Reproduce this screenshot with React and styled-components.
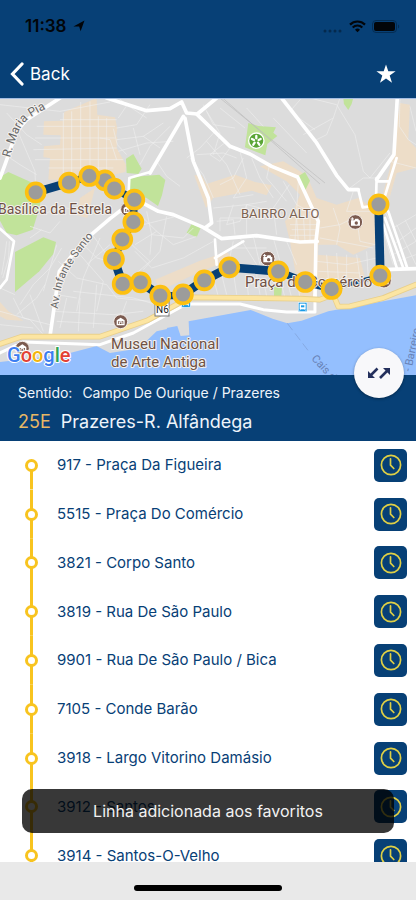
import React from "react";
import styled, { createGlobalStyle } from "styled-components";

const navy = "#074076";
const amber = "#f8c41f";

const GlobalStyle = createGlobalStyle`
  *, *::before, *::after { box-sizing: border-box; }
  body { margin: 0; background: #fff; font-family: Inter, "Liberation Sans", sans-serif; }
  button { font: inherit; border: 0; padding: 0; cursor: pointer; }
  svg { display: block; }
`;

const Screen = styled.div`
  display: flex;
  flex-direction: column;
  height: 100vh;
  min-height: 600px;
  overflow: hidden;
  background: #fff;
`;

const Header = styled.header`
  flex: none;
  background: ${navy};
`;

const StatusBar = styled.div`
  display: flex;
  align-items: center;
  justify-content: space-between;
  height: 52px;
  padding: 0 16px 0 25px;
  color: #020509;
`;

const StatusGroup = styled.div`
  display: flex;
  align-items: center;
  gap: 6px;
`;

const Clock = styled.time`
  font-size: 17px;
  line-height: 20px;
  font-weight: 600;
`;

const NavBar = styled.nav`
  display: flex;
  align-items: center;
  justify-content: space-between;
  height: 46px;
  padding: 0 20px 2px 10px;
`;

const NavButton = styled.button`
  display: flex;
  align-items: center;
  gap: 6px;
  background: none;
  color: #fff;
  font-size: 17px;
  line-height: 24px;
`;

const MapArea = styled.section`
  flex: none;
  height: 277px;
  background: #dcdcdc;
`;

const MapSvg = styled.svg`
  width: 100%;
  height: 100%;
  font-family: Roboto, "Liberation Sans", sans-serif;
`;

const Place = styled.text`
  fill: ${(p) => p.$fill || "#6f5145"};
  font-size: ${(p) => p.$size}px;
  font-weight: ${(p) => p.$weight || 400};
  stroke: ${(p) => p.$halo || "#f4f1ee"};
  stroke-width: 2px;
  stroke-linejoin: round;
  paint-order: stroke;
`;

const LineInfo = styled.section`
  position: relative;
  flex: none;
  display: flex;
  flex-direction: column;
  gap: 6px;
  padding: 8px 18px 6px;
  background: ${navy};
  color: #eef4fb;
`;

const Direction = styled.p`
  display: flex;
  gap: 10px;
  margin: 0;
  font-size: 14px;
  line-height: 20px;
`;

const LineName = styled.h1`
  display: flex;
  gap: 10px;
  margin: 0;
  font-size: 18px;
  line-height: 26px;
  font-weight: 400;
`;

const LineCode = styled.span`
  color: #e6b765;
`;

const SwapButton = styled.button`
  position: absolute;
  top: -27px;
  right: 12px;
  display: grid;
  place-items: center;
  width: 50px;
  height: 50px;
  border-radius: 50%;
  background: #f8f8fa;
  box-shadow: 0 1px 3px rgba(0, 0, 0, 0.35);
`;

const StopsArea = styled.main`
  position: relative;
  flex: 1;
  min-height: 0;
  overflow: hidden;
`;

const StopList = styled.ol`
  display: grid;
  grid-auto-rows: minmax(48px, 1fr);
  height: calc(100% + 18px);
  margin: 0;
  padding: 0;
  list-style: none;
`;

const StopRow = styled.li`
  display: grid;
  grid-template-columns: 13px 1fr 33px;
  column-gap: 19px;
  align-items: center;
  padding: 0 9px 0 25px;
  color: ${navy};
  font-size: 15px;
  line-height: 20px;
`;

const Rail = styled.span`
  display: grid;
  align-self: stretch;
  place-items: center;
  background: linear-gradient(${amber}, ${amber}) center bottom / 3px
    ${(p) => (p.$first ? "50%" : "100%")} no-repeat;
`;

const RailDot = styled.span`
  width: 13px;
  height: 13px;
  border: 3px solid ${amber};
  border-radius: 50%;
  background: #fff;
`;

const TimesButton = styled.button`
  display: grid;
  place-items: center;
  height: 33px;
  border-radius: 5px;
  background: ${navy};
`;

const Toast = styled.div`
  position: absolute;
  right: 22px;
  bottom: 29px;
  left: 22px;
  padding: 12px;
  border-radius: 10px;
  background: rgba(0, 0, 0, 0.78);
  color: #f2f2f2;
  font-size: 16px;
  line-height: 20px;
  text-align: center;
`;

const HomeArea = styled.footer`
  flex: none;
  display: flex;
  justify-content: center;
  padding: 23px 0 9px;
  background: #e9e9e9;
`;

const HomeIndicator = styled.span`
  width: 148px;
  height: 6px;
  border-radius: 3px;
  background: #000;
`;

const stops = [
  "917 - Praça Da Figueira",
  "5515 - Praça Do Comércio",
  "3821 - Corpo Santo",
  "3819 - Rua De São Paulo",
  "9901 - Rua De São Paulo / Bica",
  "7105 - Conde Barão",
  "3918 - Largo Vitorino Damásio",
  "3912 - Santos",
  "3914 - Santos-O-Velho",
];

const markers = [
  [107, 283], [207, 254], [315, 247], [268, 234], [343, 272], [403, 305],
  [400, 372], [367, 424], [342, 483], [368, 558], [422, 553], [481, 593],
  [549, 589], [613, 547], [688, 508], [835, 520], [916, 552], [995, 573],
  [1141, 533], [1136, 319],
];

const water = [
  "M0 834V792L190 770L290 744L330 765L410 752L425 790L330 834Z",
  "M330 834L470 700L505 692L512 712L500 690L532 684L542 714L568 712L566 670L752 636L818 662L862 676L905 668L985 640L1248 592V834Z",
];

const urban = [
  "M193 42L290 0L292 50L345 58L352 92L335 215L262 222L240 245L145 245L150 180L130 178L132 145L180 140L182 112L130 110L132 70L190 68Z",
  "M335 92L352 120L350 150L378 200L376 222L335 232L320 120Z",
  "M240 300L285 270L262 360L232 352Z",
  "M583 232L605 232L620 258L675 240L705 230L765 252L815 262L800 292L755 278L705 288L640 300L618 330L600 280Z",
  "M780 205L850 190L920 232L950 300L1010 320L1075 300L1130 340L1125 440L1060 470L1010 440L955 440L950 600L900 600L870 430L855 370L880 340L900 290L860 250Z",
  "M1200 15L1230 20L1225 125L1248 150V210L1190 225L1160 330L1140 320L1170 210Z",
  "M465 545L600 488L680 462L700 480L560 540L480 580Z",
  "M0 612L25 640L70 668L20 665L0 655Z",
  "M950 470L1080 480L1100 560L990 570L950 560Z",
];

const parks = [
  "M0 238L25 222L100 256L125 300L112 350L98 395L50 412L20 405L0 368Z",
  "M45 462L130 418L168 432L160 468L118 520L45 582Z",
  "M378 182L400 168L425 212L415 228L380 225Z",
  "M388 238L478 230L496 246L486 292L474 324L440 300L400 290L385 270Z",
  "M745 75L775 84L828 88L820 104L832 114L802 138L796 172L735 148Z",
  "M895 235L915 222L930 248L915 278Z",
  "M1030 0H1060L1055 18L1045 36L1032 18Z",
  "M575 378L602 390L590 418L560 404Z",
  "M822 560L846 565L844 598L822 596Z",
];

const lanes = [
  "M0 20L180 40L330 12M20 45L80 110L125 140M45 80L105 220L108 300M0 160L60 200L110 230",
  "M190 45V230M215 40V240M242 12V245M270 10V240M295 55V225M320 60V218M110 85H345M105 120H345M100 155L350 150M105 185H370M145 210H340M180 65H350",
  "M355 60L382 20L355 0M350 90L410 80L450 20M350 125L430 115L490 75M355 160L440 135L520 130M380 20L440 60M430 115L480 150M400 90L420 170M340 92L352 140L380 170M300 120L330 125L350 185",
  "M470 190L500 235L540 265M510 85L450 145L420 200M425 355L470 400L520 440L590 415M430 380L530 355M440 340L455 410L450 470M470 400L405 440M405 460L455 510L550 480L640 430M455 410L550 420L580 390M500 355L480 460L430 515M390 435L450 490L405 530",
  "M570 180L610 230L640 300M620 130L680 200L720 290M650 95L600 150L560 180M590 170L670 165L710 180M620 40L660 105L640 170M680 130L630 170L660 190L690 150M730 180L700 240L660 260M720 160L740 240L700 300L760 290M755 180L780 240L820 300M700 320L680 380L720 370L740 320L800 310M640 330L740 320L780 330M650 370L700 365L705 410M740 320V410M660 400V360H740M810 195L800 240L860 310",
  "M660 30L735 90M610 20L640 80L705 90M740 30L790 85M820 60L920 165M905 0L870 40L945 95M930 0L1010 20M910 110L1000 60L1020 0M940 130L980 110L1000 60M1010 20L1065 110L1090 220L1110 240M1170 165L1110 240M1130 240L1090 240L1050 270M1170 190L1248 210M1200 0L1198 85L1225 125L1248 140M1230 25L1248 100",
  "M868 260L820 330L830 410M850 250L890 320L945 350M895 250L885 430M870 380H950M875 395H950M870 412H950M890 360L895 430M910 350L915 430M930 345V430M960 390L1020 380L1060 360M1000 330L1020 390L1010 440M1060 280L1040 340L1110 340M1070 360L1080 430L1125 440M960 420L1120 450",
  "M700 430L685 500M720 420L770 500M760 415L780 500M820 420L840 490M860 430L890 500M700 450H800M770 530L780 590M790 540L800 595M700 520L710 590M740 535L745 592M665 530L680 590M640 540L655 595M845 560L855 600M860 540L875 600M890 540L900 600M950 490L1040 500L1130 480M955 520L1080 525M980 470L985 540M1010 465L1015 545M1040 470V550M1070 470L1080 540M1100 460L1105 540",
  "M1180 440L1248 390M1180 470L1248 430M1190 490L1248 470M1150 330L1180 390L1248 350M1190 380L1248 500M1215 365L1248 430M1150 400L1180 500",
  "M120 350L190 330L260 335M175 490L230 540L320 560L350 600L450 610M200 520L170 590L230 600M250 440L290 480L330 490M240 470L310 550L290 640M270 400L320 470M260 500L330 440M300 420L250 540L230 640M220 580L400 600L470 620M160 640L340 650L430 640M170 670L350 680M200 600L180 690M240 600L235 700M290 560L280 690M380 610L365 650M50 650L110 600L135 560M40 600L70 660L150 680M90 590L130 700M0 640L90 665L130 710M0 680L100 690M0 570L45 590",
  "M90 385L150 405L180 370M125 395L90 420M170 440L130 580M185 450L150 510L100 560L60 620M20 430L15 470L5 530M28 430L26 480L8 540",
];

const minorRoads = [
  "M305 230L390 312M385 305L388 240L450 222M730 430L645 480M645 425L650 500M1130 240L1128 310M1135 250L1165 250M1190 180L1150 310M1155 360L1210 510M1165 340L1222 510M1150 380L1192 515M1075 275L1088 328L1110 325M0 392L42 430L20 545L0 570",
];

const roads = [
  "M180 0L80 65L50 100L15 200L0 240",
  "M320 0L440 38L510 32L545 12L560 45L592 48L650 0",
  "M550 55L450 225",
  "M555 60L580 190L625 300L635 375L615 390",
  "M592 50L690 145L750 168L815 205L893 237L955 370L948 430L945 600",
  "M845 0L950 135L1010 232L1045 275L1075 275",
  "M1192 0L1182 170L1130 245",
  "M400 300L475 340L520 350L610 388L665 422L770 413L900 432L952 430",
  "M395 312L330 362L250 430L178 520L150 715",
  "M1150 515L1248 512",
];

const mainRoad =
  "M0 738L65 716L300 716L440 668L570 598L900 602L960 605L1000 590L1015 626L1050 625L1150 600L1248 560";

function LocationIcon() {
  return (
    <svg width="12" height="12" viewBox="0 0 12 12" aria-hidden="true">
      <path d="M11.5.5L7.6 11.2 6.2 6.4H.4z" fill="currentColor" />
    </svg>
  );
}

function SignalIcon() {
  return (
    <svg width="20" height="13" viewBox="0 0 20 13" aria-hidden="true" fill="#04294d">
      <circle cx="2" cy="11" r="1.5" />
      <circle cx="7" cy="11" r="1.5" />
      <circle cx="12" cy="11" r="1.5" />
      <circle cx="17" cy="11" r="1.5" />
    </svg>
  );
}

function WifiIcon() {
  return (
    <svg width="17" height="13" viewBox="0 0 17 13" aria-hidden="true" fill="none" stroke="currentColor">
      <path d="M1 4.6a10.6 10.6 0 0 1 15 0" strokeWidth="2.2" />
      <path d="M3.7 7.5a6.8 6.8 0 0 1 9.6 0" strokeWidth="2.1" />
      <path d="M8.5 12.3L6 9.8a3.5 3.5 0 0 1 5 0z" fill="currentColor" stroke="none" />
    </svg>
  );
}

function BatteryIcon() {
  return (
    <svg width="28" height="13" viewBox="0 0 28 13" aria-hidden="true">
      <rect x="0.5" y="0.5" width="24" height="12" rx="3.5" fill="none" stroke="#042c52" />
      <rect x="2" y="2" width="21" height="9" rx="2" fill="currentColor" />
      <path d="M26 4.5c1.6.5 1.6 3.5 0 4z" fill="#042c52" />
    </svg>
  );
}

function ChevronIcon() {
  return (
    <svg width="14" height="24" viewBox="0 0 14 24" aria-hidden="true">
      <path d="M12 2L2.5 12 12 22" fill="none" stroke="#fff" strokeWidth="3.2" strokeLinecap="round" />
    </svg>
  );
}

function StarIcon() {
  return (
    <svg width="20" height="20" viewBox="0 0 20 20" aria-hidden="true">
      <path d="M10 .4l2.300 6.900h7.300l-5.900 4.300 2.300 7.200L10 14.400l-6 4.400 2.300-7.200L.4 7.300h7.300z" fill="#fff" />
    </svg>
  );
}

function SwapIcon() {
  return (
    <svg width="24" height="12" viewBox="0 0 24 12" aria-hidden="true" fill="#24305c">
      <path d="M1 4V11H8zM16 1H23V8z" />
      <path d="M10.500 1.500L4 8M13 11L20 4" stroke="#24305c" strokeWidth="2.600" />
    </svg>
  );
}

function TimesIcon() {
  return (
    <svg width="22" height="22" viewBox="0 0 22 22" aria-hidden="true" fill="none" stroke="#dfcf45" strokeWidth="1.7">
      <circle cx="11" cy="11" r="9.6" />
      <path d="M10.5 4.8v6.4l3.3 3.3" strokeLinecap="round" strokeLinejoin="round" />
    </svg>
  );
}

function CameraPin({ x, y }) {
  return (
    <g transform={`translate(${x} ${y})`}>
      <circle r="22" fill="#7b5b50" stroke="#f5efeb" strokeWidth="3" />
      <path d="M-13-5h10l3-5h9l2 5h3V11h-27z" fill="#fff" />
      <circle cx="3" cy="3" r="5" fill="#7b5b50" />
      <path d="M-9-14v10M-14-9h10" stroke="#fff" strokeWidth="3" />
    </g>
  );
}

function MuseumPin({ x, y }) {
  return (
    <g transform={`translate(${x} ${y})`}>
      <circle r="21" fill="#7b5b50" stroke="#f5efeb" strokeWidth="3" />
      <path d="M-12-4L0-12 12-4V11h-24zM-8-1V7H8V-1z" fill="#fff" fillRule="evenodd" />
      <path d="M-4 7V1h8v6" fill="none" stroke="#fff" strokeWidth="3" />
    </g>
  );
}

function StationPin({ x, y }) {
  return (
    <g transform={`translate(${x} ${y})`}>
      <rect x="-13" y="-14" width="26" height="28" fill="#1a9be6" stroke="#e7f4fc" strokeWidth="2" />
      <path d="M-8-9H8V6H-8zM-6 6l-3 5M6 6l3 5" fill="#fff" stroke="#fff" strokeWidth="2" />
      <path d="M-5-5H5V1H-5z" fill="#1a9be6" />
    </g>
  );
}

function RouteMap() {
  return (
    <MapSvg viewBox="0 0 416 277" preserveAspectRatio="xMidYMid slice" role="img" aria-label="Mapa do percurso da linha 25E">
      <defs>
        <path id="street-pia" d="M10 60Q17 33 24 25Q30 18 50 9" />
        <path id="street-santo" d="M58 211Q60 187 68 173Q76 158 98 133" />
      </defs>
      <g transform="scale(0.3333)">
        <rect width="1248" height="834" fill="#dcdcdc" />
        {urban.map((d) => <path key={d} d={d} fill="#edddc8" />)}
        {parks.map((d) => <path key={d} d={d} fill="#c1e39a" />)}
        {water.map((d) => <path key={d} d={d} fill="#94bffe" />)}
        <g fill="none" stroke="#efefef" strokeOpacity="0.8" strokeWidth="2.2" strokeLinejoin="round">
          {lanes.map((d) => <path key={d} d={d} />)}
        </g>
        <path d="M660 0L975 255M668 0L960 258" fill="none" stroke="#bdbdbd" strokeWidth="2" />
        <path d="M862 676L930 765" fill="none" stroke="#7f9fd4" strokeWidth="2" strokeDasharray="26 12" />
        <g fill="none" stroke="#fff" strokeLinejoin="round" strokeLinecap="round">
          {minorRoads.map((d) => <path key={d} d={d} strokeWidth="8" />)}
          {roads.map((d) => <path key={d} d={d} strokeWidth="11" />)}
          <path d="M0 765L70 732L300 740L400 705L560 618L720 618L790 635L860 642L945 642V590" strokeWidth="9" />
          <path d={mainRoad} stroke="#e8cf8b" strokeWidth="17" />
          <path d={mainRoad} stroke="#fce5a2" strokeWidth="12" />
        </g>
        <circle cx="769" cy="128" r="23" fill="#5aa636" stroke="#fff" strokeWidth="4" />
        <g stroke="#fff" strokeWidth="7" strokeLinecap="round">
          <path d="M769 121V114M776 126L782 123M774 134L778 140M764 134L760 140M762 126L756 123" />
        </g>
        <CameraPin x={1066} y={372} />
        <CameraPin x={803} y={482} />
        <CameraPin x={1152} y={548} />
        <MuseumPin x={362} y={671} />
        <MuseumPin x={67} y={751} />
        <MuseumPin x={383} y={334} />
        <StationPin x={558} y={614} />
        <StationPin x={908} y={627} />
        <g fill="none" stroke={navy} strokeWidth="26">
          <path d="M107 283L207 254" />
          <path d="M342 483L368 558M422 553L481 593M549 589L613 547L688 508L835 520" />
          <path d="M1141 533L1136 319" />
        </g>
        <path d="M207 254L268 234L315 247L343 272L403 305L400 372L367 424L342 483M481 593H549M835 520L916 552L995 573" fill="none" stroke={navy} strokeWidth="22" />
        <path d="M995 573L1141 533" fill="none" stroke={navy} strokeWidth="13" />
      </g>
      <Place x="-2" y="116" $size={14}>Basílica da Estrela</Place>
      <Place x="241" y="120" $size={13} $fill="#7a6252">BAIRRO ALTO</Place>
      <Place x="245" y="189" $size={15}>Praça do Comércio</Place>
      <Place x="111" y="251" $size={15}>Museu Nacional</Place>
      <Place x="111" y="269" $size={15}>de Arte Antiga</Place>
      <Place $size={12} $fill="#666"><textPath href="#street-pia">R. Maria Pia</textPath></Place>
      <Place $size={11} $fill="#666"><textPath href="#street-santo">Av. Infante Santo</textPath></Place>
      <Place transform="translate(311 261) rotate(47)" $size={11} $fill="#6882b6" $halo="#94bffe">Cais d</Place>
      <Place transform="translate(411 274) rotate(-78)" $size={11} $fill="#6882b6" $halo="#94bffe">- Barreiro</Place>
      <rect x="155" y="203" width="14" height="15" fill="#fff" stroke="#777" strokeWidth="1" />
      <Place x="156" y="215" $size={10} $fill="#222" $halo="#fff">N6</Place>
      <Place x="7" y="264" $size={20} $weight={500} $halo="#fff">
        <tspan fill="#3d7ef0">G</tspan><tspan fill="#e34133">o</tspan><tspan fill="#f3b50c">o</tspan>
        <tspan fill="#3d7ef0">g</tspan><tspan fill="#31a452">l</tspan><tspan fill="#e34133">e</tspan>
      </Place>
      <g transform="scale(0.3333)" fill="#9c9c9b" stroke="#fdc010" strokeWidth="11">
        {markers.map(([x, y]) => <circle key={`${x}-${y}`} cx={x} cy={y} r="27" />)}
      </g>
      <rect width="416" height="1" fill="#a3bde2" />
    </MapSvg>
  );
}

export default function App() {
  return (
    <Screen>
      <GlobalStyle />
      <Header>
        <StatusBar>
          <StatusGroup>
            <Clock>11:38</Clock>
            <LocationIcon />
          </StatusGroup>
          <StatusGroup>
            <SignalIcon />
            <WifiIcon />
            <BatteryIcon />
          </StatusGroup>
        </StatusBar>
        <NavBar>
          <NavButton type="button"><ChevronIcon />Back</NavButton>
          <NavButton type="button" aria-label="Favorito"><StarIcon /></NavButton>
        </NavBar>
      </Header>
      <MapArea><RouteMap /></MapArea>
      <LineInfo>
        <Direction><span>Sentido:</span><span>Campo De Ourique / Prazeres</span></Direction>
        <LineName><LineCode>25E</LineCode><span>Prazeres-R. Alfândega</span></LineName>
        <SwapButton type="button" aria-label="Inverter sentido"><SwapIcon /></SwapButton>
      </LineInfo>
      <StopsArea>
        <StopList>
          {stops.map((stop, i) => (
            <StopRow key={stop}>
              <Rail $first={i === 0}><RailDot /></Rail>
              <span>{stop}</span>
              <TimesButton type="button" aria-label={`Horários: ${stop}`}><TimesIcon /></TimesButton>
            </StopRow>
          ))}
        </StopList>
        <Toast role="status">Linha adicionada aos favoritos</Toast>
      </StopsArea>
      <HomeArea><HomeIndicator /></HomeArea>
    </Screen>
  );
}
